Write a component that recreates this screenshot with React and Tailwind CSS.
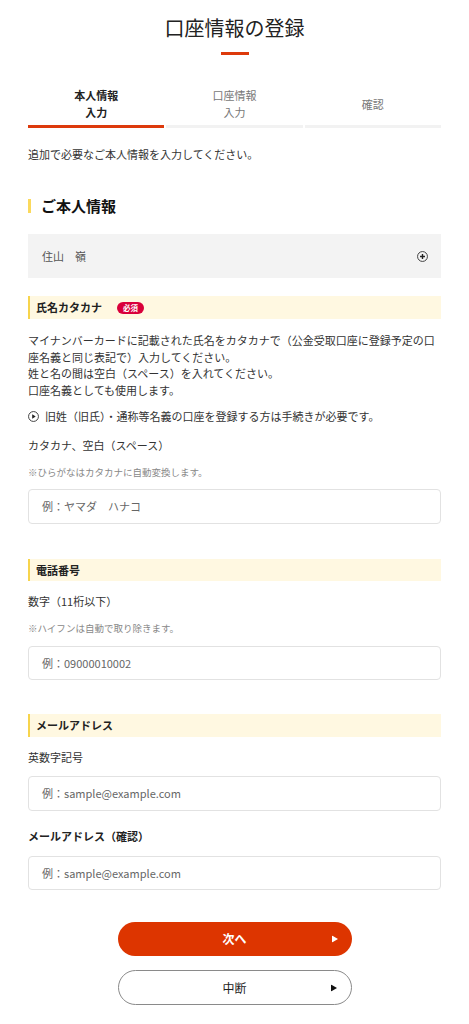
import React from 'react'

const FONT = "font-['Noto_Sans_CJK_JP','Noto_Sans',sans-serif]"

// 項目見出し（黄色の帯）
function FieldLabel({ children, required, className = '' }) {
  return (
    <div className={`flex items-center border-l-2 border-[#f7d44c] bg-[#fff8e1] pl-[6px] ${className}`}>
      <span className="text-[11px] font-bold leading-none text-[#222]">{children}</span>
      {required && (
        <span className="ml-[15px] flex h-[12px] w-[27px] items-center justify-center rounded-full bg-[#d9003a] text-[7.5px] font-bold leading-none text-white">
          必須
        </span>
      )}
    </div>
  )
}

function TextInput({ placeholder, className = '' }) {
  return (
    <div className={`flex items-center rounded-[4px] border border-[#e2e2e2] bg-white pl-[13px] ${className}`}>
      <span className="text-[11px] leading-none text-[#666]">{placeholder}</span>
    </div>
  )
}

const Triangle = ({ color }) => (
  <svg width="6" height="7" viewBox="0 0 6 7" className="absolute right-[14px] top-1/2 -translate-y-1/2">
    <path d="M0 0 L6 3.5 L0 7 Z" fill={color} />
  </svg>
)

export default function App() {
  const tabs = [
    { label: ['本人情報', '入力'], active: true },
    { label: ['口座情報', '入力'], active: false },
    { label: ['確認'], active: false },
  ]

  return (
    <div className={`min-h-screen bg-white text-[#333] ${FONT}`}>
      <div className="px-[28px] pb-[19px]">
        <h1 className="pt-[14px] text-center text-[20px] font-normal leading-[28px] text-[#222]">口座情報の登録</h1>
        <div className="mx-auto mt-[10px] h-[3px] w-[28px] bg-[#dd3a0c]" />

        {/* ステップ */}
        <div className="mt-[31px] grid grid-cols-3 gap-[2px]">
          {tabs.map((t, i) => (
            <div key={i} className="flex flex-col">
              <div
                className={`flex h-[36px] flex-col items-center justify-center text-[11px] leading-[17px] ${
                  t.active ? 'font-bold text-[#222]' : 'text-[#777]'
                }`}
              >
                {t.label.map((l) => (
                  <span key={l}>{l}</span>
                ))}
              </div>
              <div className={`mt-[3px] h-[3px] ${t.active ? 'bg-[#dd3a0c]' : 'bg-[#f2f2f2]'}`} />
            </div>
          ))}
        </div>

        <p className="mt-[18px] text-[11px] leading-[17px] text-[#333]">追加で必要なご本人情報を入力してください。</p>

        <div className="mt-[33px] flex h-[20px] items-center">
          <div className="h-[14px] w-[3px] bg-[#fbd95c]" />
          <h2 className="ml-[10px] text-[15px] font-bold leading-[20px] text-[#111]">ご本人情報</h2>
        </div>

        <div className="mt-[18px] flex h-[44px] items-center justify-between bg-[#f3f3f3] pl-[14px] pr-[13px]">
          <span className="text-[11px] leading-none text-[#555]">住山　嶺</span>
          <svg width="11" height="11" viewBox="0 0 12 12">
            <circle cx="6" cy="6" r="5.4" fill="none" stroke="#333" strokeWidth="1" />
            <path d="M6 3.3 V8.7 M3.3 6 H8.7" stroke="#222" strokeWidth="1.5" />
          </svg>
        </div>

        {/* 氏名カタカナ */}
        <FieldLabel required className="mt-[18px] h-[23px]">氏名カタカナ</FieldLabel>
        <div className="mt-[13px] text-[11px] leading-[16.5px] text-[#333]">
          <p>マイナンバーカードに記載された氏名をカタカナで（公金受取口座に登録予定の口座名義と同じ表記で）入力してください。</p>
          <p>姓と名の間は空白（スペース）を入れてください。</p>
          <p>口座名義としても使用します。</p>
        </div>
        <div className="mt-[10px] flex items-center gap-[6px] text-[11px] leading-[17px]">
          <svg width="11" height="11" viewBox="0 0 12 12" className="shrink-0">
            <circle cx="6" cy="6" r="5.4" fill="none" stroke="#333" strokeWidth="1" />
            <path d="M4.6 3.6 L8.4 6 L4.6 8.4 Z" fill="#222" />
          </svg>
          <span>旧姓（旧氏）・通称等名義の口座を登録する方は手続きが必要です。</span>
        </div>
        <p className="mt-[12px] text-[11px] leading-[17px]">カタカナ、空白（スペース）</p>
        <p className="mt-[11px] text-[9.5px] leading-[14px] text-[#888]">※ひらがなはカタカナに自動変換します。</p>
        <TextInput placeholder="例：ヤマダ　ハナコ" className="mt-[10px] h-[35px]" />

        {/* 電話番号 */}
        <FieldLabel className="mt-[35px] h-[22px]">電話番号</FieldLabel>
        <p className="mt-[12px] text-[11px] leading-[17px]">数字（11桁以下）</p>
        <p className="mt-[11px] text-[9.5px] leading-[14px] text-[#888]">※ハイフンは自動で取り除きます。</p>
        <TextInput placeholder="例：09000010002" className="mt-[11px] h-[34px]" />

        {/* メールアドレス */}
        <FieldLabel className="mt-[34px] h-[23px]">メールアドレス</FieldLabel>
        <p className="mt-[12px] text-[11px] leading-[17px]">英数字記号</p>
        <TextInput placeholder="例：sample@example.com" className="mt-[10px] h-[35px]" />
        <p className="mt-[17px] text-[11px] font-bold leading-[17px] text-[#222]">メールアドレス（確認）</p>
        <TextInput placeholder="例：sample@example.com" className="mt-[11px] h-[34px]" />

        {/* ボタン */}
        <div className="mt-[32px] flex flex-col items-center gap-[14px]">
          <button className="relative flex h-[34px] w-[234px] items-center justify-center rounded-full bg-[#dd3500] text-[12px] font-bold text-white">
            次へ
            <Triangle color="#fff" />
          </button>
          <button className="relative flex h-[35px] w-[234px] items-center justify-center rounded-full border border-[#8a8a8a] bg-white text-[12px] text-[#222]">
            中断
            <Triangle color="#111" />
          </button>
        </div>
      </div>
    </div>
  )
}
